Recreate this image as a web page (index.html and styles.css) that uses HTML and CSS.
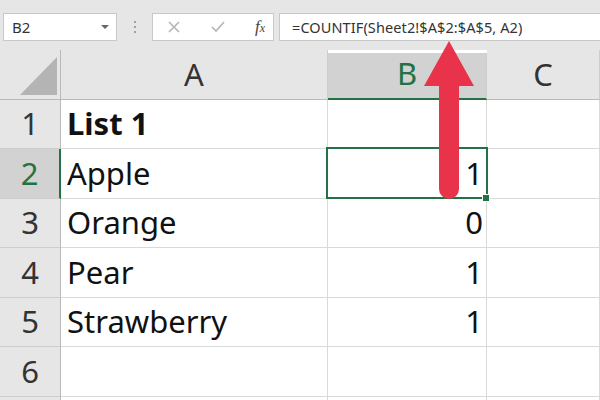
FILE: index.html
```html
<!DOCTYPE html>
<html lang="en">
  <head>
    <meta charset="UTF-8" />
    <meta name="viewport" content="width=device-width, initial-scale=1.0" />
    <title>COUNTIF</title>
    <link rel="stylesheet" href="styles.css">
  </head>

  <body>
    <div class="toolbar">
      <div class="name-box">
        <span>B2</span>
        <span class="caret"></span>
      </div>
      <div class="grip">
        <i></i><i></i><i></i>
      </div>
      <div class="btn-box">
        <svg class="ico" width="14" height="14" viewBox="0 0 14 14">
          <path d="M2 2 L12 12 M12 2 L2 12" stroke="#b5b5b5" stroke-width="1.6" fill="none" />
        </svg>
        <svg class="ico" width="16" height="14" viewBox="0 0 16 14">
          <path d="M2 7 L6 11 L14 2" stroke="#b5b5b5" stroke-width="1.6" fill="none" />
        </svg>
        <span class="fx">f<small>x</small></span>
      </div>
      <div class="formula">=COUNTIF(Sheet2!$A$2:$A$5, A2)</div>
    </div>

    <div class="sheet">
      <div class="hd corner"><span class="tri"></span></div>
      <div class="hd col">A</div>
      <div class="hd col sel">B</div>
      <div class="hd col">C</div>

      <div class="rh">1</div>
      <div class="cell bold">List 1</div>
      <div class="cell num"></div>
      <div class="cell"></div>

      <div class="rh sel">2</div>
      <div class="cell">Apple</div>
      <div class="cell num active">1</div>
      <div class="cell"></div>

      <div class="rh">3</div>
      <div class="cell">Orange</div>
      <div class="cell num">0</div>
      <div class="cell"></div>

      <div class="rh">4</div>
      <div class="cell">Pear</div>
      <div class="cell num">1</div>
      <div class="cell"></div>

      <div class="rh">5</div>
      <div class="cell">Strawberry</div>
      <div class="cell num">1</div>
      <div class="cell"></div>

      <div class="rh">6</div>
      <div class="cell"></div>
      <div class="cell num"></div>
      <div class="cell"></div>

      <!-- row 7, only its top edge is visible -->
      <div class="rh"></div>
      <div class="cell"></div>
      <div class="cell num"></div>
      <div class="cell"></div>
    </div>

    <!-- red arrow pointing at the formula -->
    <svg class="arrow" width="600" height="400" viewBox="0 0 600 400">
      <line x1="449" y1="78" x2="449" y2="189" stroke="#e8334a" stroke-width="20" stroke-linecap="round" />
      <polygon points="449,41 474,86 424,86" fill="#e8334a" />
    </svg>
  </body>
</html>
```

FILE: styles.css
```css
* {
  margin: 0;
  padding: 0;
  box-sizing: border-box;
}

body {
  width: 600px;
  height: 400px;
  overflow: hidden;
  position: relative;
  background-color: #fff;
  font-family: "Noto Sans", sans-serif;
}

/* formula bar */
.toolbar {
  height: 50px;
  background-color: #e6e6e6;
  display: flex;
  align-items: flex-start;
  padding: 13px 0 0 3px;
}

.name-box,
.btn-box,
.formula {
  height: 28px;
  background-color: #fff;
  border: 1px solid #c8c8c8;
  display: flex;
  align-items: center;
  font-size: 14px;
  color: #333;
}

.name-box {
  width: 114px;
  padding: 0 7px 0 8px;
  justify-content: space-between;
  font-size: 15px;
}

.caret {
  width: 0;
  height: 0;
  border-left: 4px solid transparent;
  border-right: 4px solid transparent;
  border-top: 4px solid #666;
}

.grip {
  width: 35px;
  display: flex;
  flex-direction: column;
  align-items: center;
  gap: 3px;
  padding-top: 8px;
}

.grip i {
  width: 2px;
  height: 2px;
  background-color: #a0a0a0;
}

.btn-box {
  width: 122px;
  padding: 0 8px 0 14px;
  justify-content: space-between;
}

.fx {
  font-family: "Liberation Serif", serif;
  font-style: italic;
  font-size: 17px;
  color: #444;
}

.fx small {
  font-size: 12px;
}

.formula {
  flex: 1;
  margin-left: 5px;
  margin-right: -2px;
  padding-left: 12px;
  font-size: 14.5px;
  letter-spacing: 0.1px;
}

/* sheet grid */
.sheet {
  display: grid;
  grid-template-columns: 61px 267px 159px 1fr;
  grid-template-rows: 50px 49px 50px 49px 50px 49px 50px 50px;
}

.hd {
  background-color: #e6e6e6;
  border-bottom: 1px solid #b9b9b9;
  border-right: 1px solid #cdcdcd;
  font-size: 31px;
  color: #333;
  display: flex;
  align-items: flex-end;
  justify-content: center;
  padding-bottom: 4px;
}

.hd.corner {
  border-right: 1px solid #b9b9b9;
  position: relative;
}

.tri {
  position: absolute;
  left: 20px;
  top: 7px;
  width: 37px;
  height: 38px;
  background-color: #b4b4b4;
  clip-path: polygon(100% 0, 100% 100%, 0 100%);
}

.hd.sel {
  background-color: #d2d2d2;
  color: #217346;
  border-bottom: 2px solid #217346;
  margin-top: 3px;
}

.rh {
  background-color: #e6e6e6;
  border-right: 1px solid #b9b9b9;
  border-bottom: 1px solid #cdcdcd;
  font-size: 31px;
  color: #333;
  display: flex;
  align-items: flex-end;
  justify-content: center;
  padding-bottom: 4px;
}

.rh.sel {
  background-color: #d2d2d2;
  color: #217346;
  border-right: 2px solid #217346;
}

.cell {
  border-right: 1px solid #d9d9d9;
  border-bottom: 1px solid #d9d9d9;
  font-size: 31px;
  color: #111;
  display: flex;
  align-items: flex-end;
  padding: 0 6px 4px 6px;
  white-space: nowrap;
}

.cell.bold {
  font-weight: bold;
}

.cell.num {
  justify-content: flex-end;
  padding-right: 3px;
}

.cell.active {
  position: relative;
}

.cell.active::after {
  content: "";
  position: absolute;
  left: -2px;
  top: -2px;
  right: -2px;
  bottom: -1px;
  border: 2px solid #217346;
}

.cell.active::before {
  content: "";
  position: absolute;
  right: -4px;
  bottom: -4px;
  width: 6px;
  height: 6px;
  background-color: #217346;
  border: 1px solid #fff;
  z-index: 1;
}

.arrow {
  position: absolute;
  left: 0;
  top: 0;
  pointer-events: none;
}
```
